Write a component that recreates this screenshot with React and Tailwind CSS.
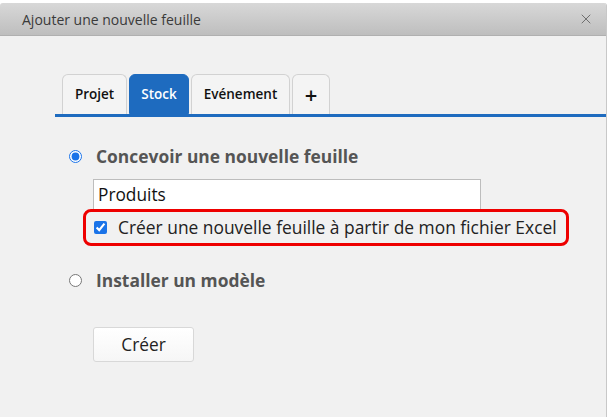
import { X } from "lucide-react";

const TABS = [
  { label: "Projet", w: "w-[65px]" },
  { label: "Stock", w: "w-[60px]", active: true },
  { label: "Evénement", w: "w-[99px]" },
  { label: "+", w: "w-[38px]", plus: true },
];

export default function App() {
  return (
    <div className="w-[609px] h-[419px] bg-white pt-[3px] font-['Open_Sans',sans-serif]">
      <div className="w-[607px] h-[414px] flex flex-col bg-[#f1f1f1] border-r border-[#c8c8c8] rounded-t-[3px] overflow-hidden">
        {/* Header */}
        <div className="h-[33px] shrink-0 flex items-center justify-between pl-[22px] pr-[12px] bg-gradient-to-b from-[#d8d8d8] to-[#bebebe] border-b border-[#b0b0b0]">
          <span className="text-[14px] text-[#3a3a3a]">Ajouter une nouvelle feuille</span>
          <X size={16} strokeWidth={1.5} className="text-[#6f6f6f]" />
        </div>

        {/* Tabs */}
        <div className="mt-[38px] ml-[55px] flex items-end gap-[2px] pl-[7px] border-b-[3px] border-[#1e6bbf] h-[43px]">
          {TABS.map((t) => (
            <div
              key={t.label}
              className={`${t.w} h-[40px] flex items-center justify-center rounded-t-[6px] border ${
                t.active
                  ? "bg-[#1e6bbf] border-[#1e6bbf] text-white"
                  : "bg-[#f4f4f4] border-[#d2d2d2] border-b-0 text-[#111]"
              } ${t.plus ? "text-[22px] font-semibold" : "text-[13.5px] font-semibold"}`}
            >
              {t.label}
            </div>
          ))}
        </div>

        {/* Content */}
        <div className="pl-[69px] pt-[28px] flex flex-col">
          <label className="flex items-center gap-[14px] h-[22px]">
            <input type="radio" name="mode" defaultChecked className="w-[13px] h-[13px] m-0 accent-[#1a73e8]" />
            <span className="text-[17.4px] font-bold text-[#555]">Concevoir une nouvelle feuille</span>
          </label>

          <div className="ml-[24px] mt-[12px] w-[388px] h-[30px] bg-white border border-[#bdbdbd] border-b-0 flex items-center pl-[4px] text-[17.3px] text-[#111]">
            Produits
          </div>

          <div className="ml-[14px] w-[486px] h-[37px] border-[3px] border-[#ee0000] rounded-[8px] flex items-center pl-[8px] gap-[11px]">
            <input type="checkbox" defaultChecked className="w-[13px] h-[13px] m-0 accent-[#1a73e8]" />
            <span className="text-[17.4px] text-[#222] whitespace-nowrap">Créer une nouvelle feuille à partir de mon fichier Excel</span>
          </div>

          <label className="flex items-center gap-[14px] h-[22px] mt-[23px]">
            <input type="radio" name="mode" className="w-[13px] h-[13px] m-0" />
            <span className="text-[17.4px] font-bold text-[#555]">Installer un modèle</span>
          </label>

          <button className="ml-[24px] mt-[36px] w-[101px] h-[35px] bg-gradient-to-b from-white to-[#f6f6f6] border border-[#d8d8d8] rounded-[3px] text-[17.3px] text-[#222]">
            Créer
          </button>
        </div>
      </div>
    </div>
  );
}
